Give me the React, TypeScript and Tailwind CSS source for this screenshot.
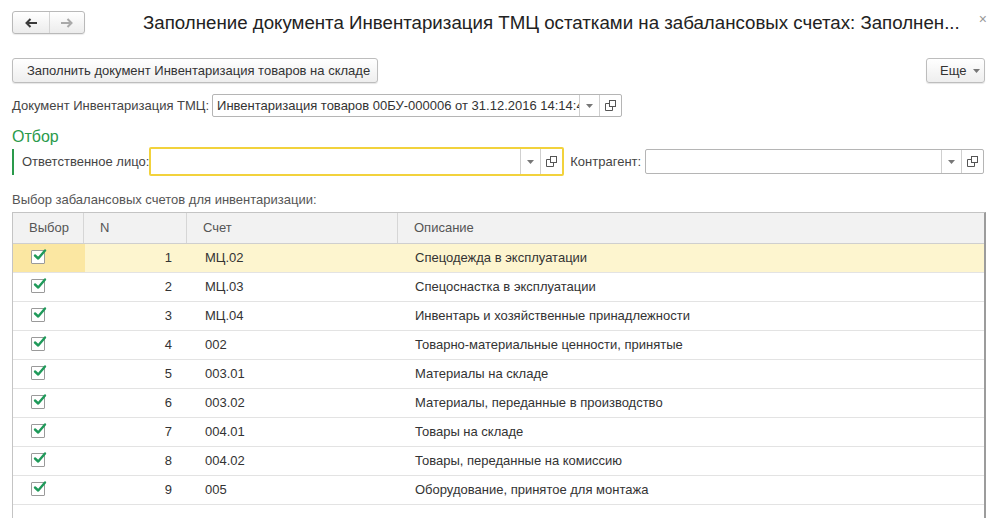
import React from 'react';

const rows = [
  { n: 1, acc: 'МЦ.02', desc: 'Спецодежда в эксплуатации' },
  { n: 2, acc: 'МЦ.03', desc: 'Спецоснастка в эксплуатации' },
  { n: 3, acc: 'МЦ.04', desc: 'Инвентарь и хозяйственные принадлежности' },
  { n: 4, acc: '002', desc: 'Товарно-материальные ценности, принятые' },
  { n: 5, acc: '003.01', desc: 'Материалы на складе' },
  { n: 6, acc: '003.02', desc: 'Материалы, переданные в производство' },
  { n: 7, acc: '004.01', desc: 'Товары на складе' },
  { n: 8, acc: '004.02', desc: 'Товары, переданные на комиссию' },
  { n: 9, acc: '005', desc: 'Оборудование, принятое для монтажа' },
];

const OpenIcon = () => (
  <svg width="11" height="11" viewBox="0 0 11 11" fill="none" stroke="#555" strokeWidth="1">
    <rect x="4.5" y="0.5" width="6" height="6" />
    <path d="M4.5 3.5H0.5V10.5H7.5V6.5" />
  </svg>
);

const Caret = () => (
  <svg width="7" height="4" viewBox="0 0 7 4">
    <path d="M0 0H7L3.5 4Z" fill="#777" />
  </svg>
);

const Check = () => (
  <div className="relative w-[14px] h-[14px] border border-[#9a9a9a] bg-white rounded-[1px]">
    <svg className="absolute left-[1px] top-[-3px]" width="14" height="14" viewBox="0 0 14 14">
      <path d="M2 7.5L5.2 10.5L12 2.5" fill="none" stroke="#1f9a5a" strokeWidth="2.4" strokeLinecap="round" strokeLinejoin="round" />
    </svg>
  </div>
);

const FieldTail = () => (
  <>
    <div className="w-[20px] h-full flex items-center justify-center border-l border-[#cfcfcf]">
      <Caret />
    </div>
    <div className="w-[22px] h-full flex items-center justify-center border-l border-[#cfcfcf]">
      <OpenIcon />
    </div>
  </>
);

export default function App() {
  return (
    <div className="w-[988px] h-[518px] overflow-hidden bg-white text-[13px] text-[#444] font-['Liberation_Sans',Arial,sans-serif]">
      {/* Title bar */}
      <div className="flex items-center pt-[11px] pl-[12px] h-[34px]">
        <div className="flex w-[73px] h-[23px] border border-[#b9b9b9] rounded-[3px] bg-gradient-to-b from-white to-[#ececec] shadow-[0_1px_1px_rgba(0,0,0,0.08)]">
          <div className="w-[37px] flex items-center justify-center border-r border-[#d4d4d4]">
            <svg width="12" height="10" viewBox="0 0 12 10">
              <path d="M12 5H3M5.5 1L1.5 5L5.5 9" fill="none" stroke="#3a3a3a" strokeWidth="2" />
            </svg>
          </div>
          <div className="flex-1 flex items-center justify-center">
            <svg width="12" height="10" viewBox="0 0 12 10">
              <path d="M0 5H9M6.5 1L10.5 5L6.5 9" fill="none" stroke="#a9a9a9" strokeWidth="2" />
            </svg>
          </div>
        </div>
        <div className="ml-[58px] text-[18.7px] text-[#222] whitespace-nowrap leading-[23px]">
          Заполнение документа Инвентаризация ТМЦ остатками на забалансовых счетах: Заполнен...
        </div>
        <div className="ml-auto mr-[1px] self-start -mt-[2px] text-[14px] text-[#999]">×</div>
      </div>

      {/* Command bar */}
      <div className="flex items-center mt-[24px] px-[12px] justify-between">
        <div className="h-[25px] w-[366px] flex items-center pl-[14px] border border-[#bdbdbd] rounded-[3px] bg-gradient-to-b from-white to-[#eeeeee] shadow-[0_1px_1px_rgba(0,0,0,0.1)] text-[#333] whitespace-nowrap">
          Заполнить документ Инвентаризация товаров на складе
        </div>
        <div className="h-[25px] w-[59px] -mr-[9px] flex items-center pl-[13px] gap-[7px] border border-[#bdbdbd] rounded-[3px] bg-gradient-to-b from-white to-[#eeeeee] shadow-[0_1px_1px_rgba(0,0,0,0.1)] text-[#333]">
          Еще
          <Caret />
        </div>
      </div>

      {/* Document field */}
      <div className="flex items-center mt-[11px] pl-[12px]">
        <span className="whitespace-nowrap">Документ Инвентаризация ТМЦ:</span>
        <div className="ml-[3px] w-[410px] h-[23px] flex items-center border border-[#b5b5b5] rounded-[2px]">
          <div className="flex-1 pl-[4px] overflow-hidden whitespace-nowrap text-[#333]">
            Инвентаризация товаров 00БУ-000006 от 31.12.2016 14:14:47
          </div>
          <FieldTail />
        </div>
      </div>

      {/* Filter group */}
      <div className="mt-[11px] pl-[12px] text-[16px] leading-[18px] text-[#2a9a4b]">Отбор</div>
      <div className="flex items-center mt-[1px] pl-[12px]">
        <div className="flex items-center h-[26px] border-l-2 border-[#2a9a4b] pl-[8px]">
          <span className="whitespace-nowrap">Ответственное лицо:</span>
        </div>
        <div className="w-[415px] h-[29px] flex items-center border-2 border-[#f2d23c] rounded-[2px]">
          <div className="flex-1" />
          <FieldTail />
        </div>
        <span className="ml-[6px] whitespace-nowrap">Контрагент:</span>
        <div className="ml-[4px] w-[339px] h-[25px] flex items-center border border-[#b5b5b5] rounded-[2px]">
          <div className="flex-1" />
          <FieldTail />
        </div>
      </div>

      {/* Table */}
      <div className="mt-[16px] pl-[12px] leading-[16px] text-[#555]">Выбор забалансовых счетов для инвентаризации:</div>
      <div className="mt-[4px] ml-[12px] w-[974px] border border-[#c4c4c4] border-r-2 border-r-[#9c9c9c] h-[400px] text-[#333]">
        <div className="flex h-[31px] bg-[#f2f2f2] border-b border-[#cfcfcf] text-[#555]">
          <div className="w-[71px] flex items-center pl-[16px] border-r border-[#d6d6d6]">Выбор</div>
          <div className="w-[103px] flex items-center pl-[16px] border-r border-[#d6d6d6]">N</div>
          <div className="w-[211px] flex items-center pl-[16px] border-r border-[#d6d6d6]">Счет</div>
          <div className="flex-1 flex items-center pl-[16px]">Описание</div>
        </div>
        {rows.map((r, i) => (
          <div
            key={r.n}
            className={`flex h-[29px] border-b border-[#e3e3e3] ${i === 0 ? 'bg-[#fdf5cf]' : 'bg-white'}`}
          >
            <div className={`w-[72px] flex items-center pl-[18px] pb-[2px] ${i === 0 ? 'bg-[#fbe7a2]' : ''}`}>
              <Check />
            </div>
            <div className="w-[103px] flex items-center justify-end pr-[16px]">{r.n}</div>
            <div className="w-[211px] flex items-center pl-[17px]">{r.acc}</div>
            <div className="flex-1 flex items-center pl-[16px] whitespace-nowrap">{r.desc}</div>
          </div>
        ))}
      </div>
    </div>
  );
}
